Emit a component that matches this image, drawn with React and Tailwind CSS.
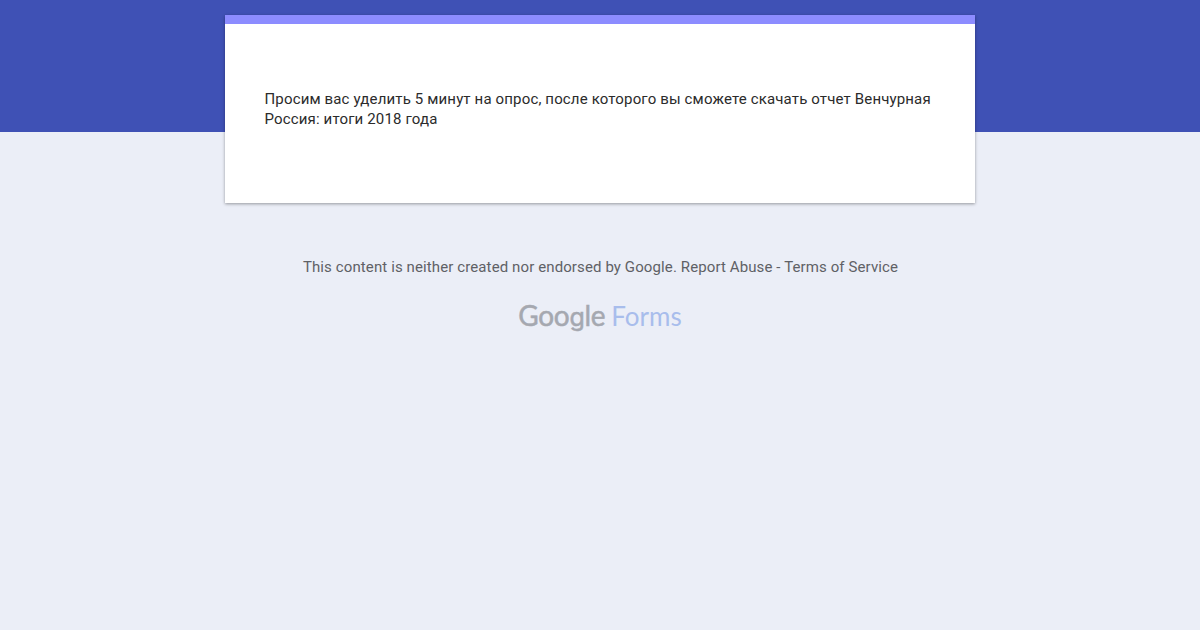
import React from "react";

const FormsLogo = () => (
  <div className="flex items-baseline justify-center font-['Lato',sans-serif] leading-8">
    <span className="text-[28px] tracking-[-0.3px] text-[#a5a8b0] [-webkit-text-stroke:0.5px_#a5a8b0]">
      Goo
      <span className="font-['Inter',sans-serif] text-[25px]">g</span>
      le
    </span>
    <span className="ml-[6px] text-[26px] text-[#a8bdec]">Forms</span>
  </div>
);

const App = () => {
  return (
    <div className="grid min-h-[630px] grid-rows-[132px_1fr] bg-[#ebeef7] font-['Roboto',sans-serif]">
      <div className="col-start-1 row-start-1 bg-[#3f51b5]" />
      <div className="col-start-1 row-span-2 row-start-1 flex flex-col items-center pt-[15px]">
        {/* Form card */}
        <div className="h-[188px] w-[750px] border-t-[9px] border-[#8c8cff] bg-white pr-10 pl-[39.5px] pt-[65px] shadow-[0_1px_3px_rgba(0,0,0,0.37)]">
          <p className="text-[15px] leading-5 tracking-[0.15px] text-[#2b2b2b]">
            Просим вас уделить 5 минут на опрос, после которого вы сможете
            скачать отчет Венчурная Россия: итоги 2018 года
          </p>
        </div>

        {/* Footer */}
        <p className="mt-[54px] pl-px text-[15px] leading-5 tracking-[0.11px] text-[#5f6166]">
          This content is neither created nor endorsed by Google. Report Abuse
          - Terms of Service
        </p>
        <div className="mt-[22px]">
          <FormsLogo />
        </div>
      </div>
    </div>
  );
};

export default App;
